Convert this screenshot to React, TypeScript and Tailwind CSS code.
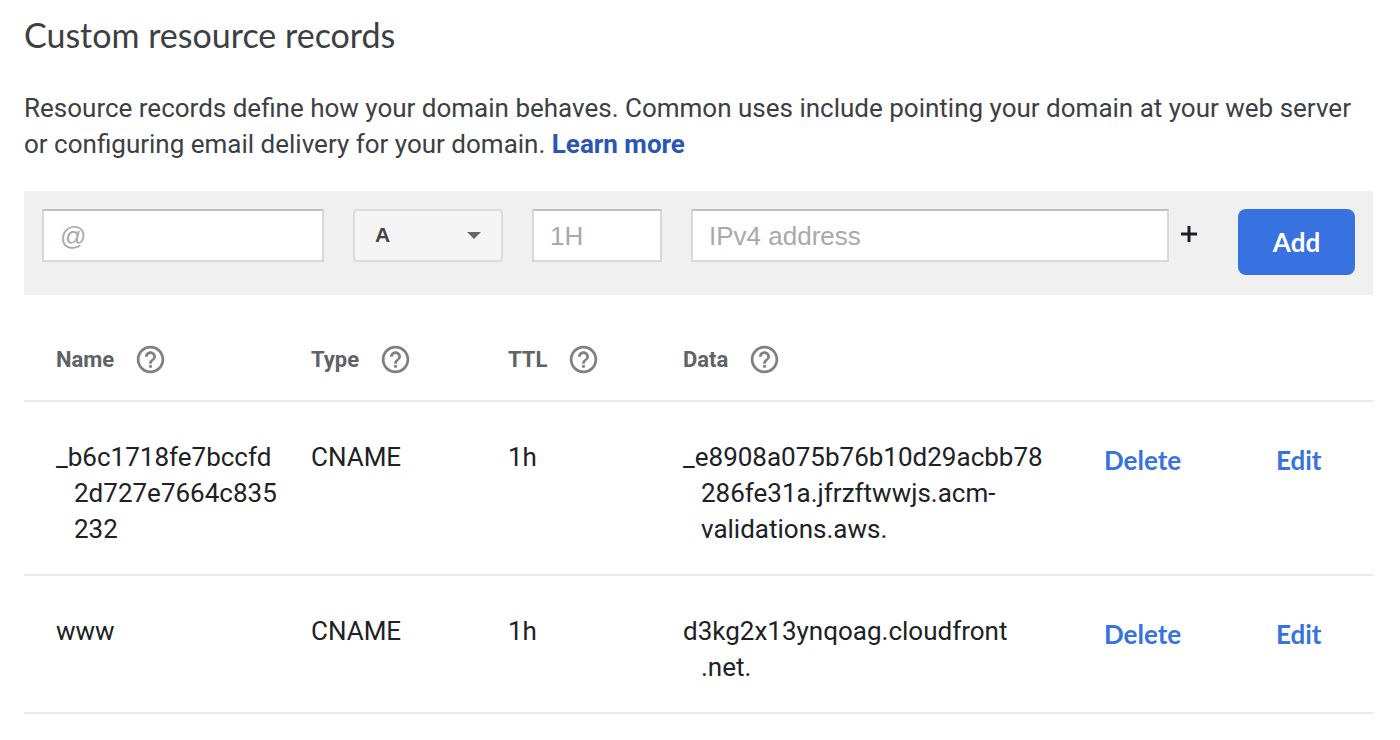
import { Fragment, type ReactNode } from "react";

type DnsRecord = {
  name: string[];
  type: string;
  ttl: string;
  data: string[];
};

const records: DnsRecord[] = [
  {
    name: ["_b6c1718fe7bccfd", "2d727e7664c835", "232"],
    type: "CNAME",
    ttl: "1h",
    data: ["_e8908a075b76b10d29acbb78", "286fe31a.jfrzftwwjs.acm-", "validations.aws."],
  },
  {
    name: ["www"],
    type: "CNAME",
    ttl: "1h",
    data: ["d3kg2x13ynqoag.cloudfront", ".net."],
  },
];

const fieldClass =
  "h-[53px] min-w-0 border-2 border-[#d9d9d9] border-t-[#c0c0c0] bg-white px-4 pt-0.5 font-['Liberation_Sans',sans-serif] text-[26px] text-[#333] outline-none placeholder:text-[#a9a9a9]";

const linkButtonClass = "cursor-pointer font-['Lato',sans-serif] text-[26px] leading-9 font-bold text-[#3871e0]";

function HelpIcon() {
  return (
    <svg viewBox="0 0 24 24" className="size-[33px]" fill="#808080" aria-hidden="true">
      <path d="M11 18h2v-2h-2v2zm1-16C6.48 2 2 6.48 2 12s4.48 10 10 10 10-4.48 10-10S17.52 2 12 2zm0 18c-4.41 0-8-3.59-8-8s3.59-8 8-8 8 3.59 8 8-3.59 8-8 8zm0-14c-2.21 0-4 1.79-4 4h2c0-1.1.9-2 2-2s2 .9 2 2c0 2-3 1.75-3 5h2c0-2.25 3-2.5 3-5 0-2.21-1.79-4-4-4z" />
    </svg>
  );
}

function HeaderCell({ label, first = false }: { label: string; first?: boolean }) {
  return (
    <th scope="col" className={first ? "p-0 pl-8" : "p-0"}>
      <div className="flex items-center gap-5 pt-12 pb-6 text-[22px] leading-8 font-bold text-[#5f6368]">
        {label}
        <button type="button" aria-label={`About ${label}`} className="cursor-pointer">
          <HelpIcon />
        </button>
      </div>
    </th>
  );
}

function Breakable({ parts }: { parts: string[] }) {
  return (
    <div className="pl-[18px] -indent-[18px]">
      {parts.map((part, i) => (
        <Fragment key={part}>
          {i > 0 && <wbr />}
          {part}
        </Fragment>
      ))}
    </div>
  );
}

function Cell({ children, className = "" }: { children: ReactNode; className?: string }) {
  return <td className={`pt-[37px] pb-[27px] align-top ${className}`}>{children}</td>;
}

export default function App() {
  return (
    <main className="min-h-screen bg-white pt-3 pr-[27px] pb-6 pl-6 font-['Roboto',sans-serif] text-[#202124]">
      <h1 className="font-['Lato',sans-serif] text-[34px] leading-[46px] text-[#3c4043]">Custom resource records</h1>
      <p className="-mr-2 mt-8 text-[26px] leading-9 text-[#3c4043]">
        Resource records define how your domain behaves. Common uses include pointing your domain at your web server or
        configuring email delivery for your domain.{" "}
        <a href="#learn-more" className="inline-block font-bold text-[#2a56b8]">
          Learn more
        </a>
      </p>

      <form
        className="mt-[29px] flex items-start bg-[#f0f0f0] px-[18px] pt-[18px] pb-5"
        onSubmit={(event) => event.preventDefault()}
      >
        <input aria-label="Name" placeholder="@" className={`${fieldClass} w-[282px]`} />
        <div className="relative ml-[29px] w-[150px]">
          <select
            aria-label="Type"
            className="h-[53px] w-full appearance-none rounded-[4px] border-2 border-[#dcdcdc] bg-[#f5f5f5] px-5 pb-0.5 font-['Liberation_Sans',sans-serif] text-[21px] font-bold text-[#444]"
          >
            <option>A</option>
            <option>AAAA</option>
            <option>CNAME</option>
            <option>MX</option>
            <option>TXT</option>
          </select>
          <svg
            viewBox="0 0 14 7"
            className="pointer-events-none absolute top-[23px] right-[22px] h-[7px] w-[14px]"
            fill="#666"
            aria-hidden="true"
          >
            <path d="M0 0h14L7 7z" />
          </svg>
        </div>
        <input aria-label="TTL" placeholder="1H" className={`${fieldClass} ml-[29px] w-[130px]`} />
        <input aria-label="Data" placeholder="IPv4 address" className={`${fieldClass} ml-[29px] flex-1`} />
        <button type="button" aria-label="Add another value" className="ml-3 flex h-[50px] cursor-pointer items-center">
          <svg viewBox="0 0 16 16" className="size-4" stroke="#202124" strokeWidth="3" aria-hidden="true">
            <path d="M8 0v16M0 8h16" />
          </svg>
        </button>
        <button
          type="submit"
          className="ml-[41px] h-[66px] w-[117px] cursor-pointer rounded-lg bg-[#3871e0] font-['Lato',sans-serif] text-[26px] font-bold text-white"
        >
          Add
        </button>
      </form>

      <table className="w-full table-fixed text-left text-[26px] leading-9">
        <colgroup>
          <col className="w-[287px]" />
          <col className="w-[197px]" />
          <col className="w-[175px]" />
          <col />
          <col className="w-[172px]" />
          <col className="w-[97px]" />
        </colgroup>
        <thead>
          <tr className="border-b-2 border-[#e8eaed]">
            <HeaderCell label="Name" first />
            <HeaderCell label="Type" />
            <HeaderCell label="TTL" />
            <HeaderCell label="Data" />
            <td />
            <td />
          </tr>
        </thead>
        <tbody>
          {records.map((record) => (
            <tr key={record.name[0]} className="border-b-2 border-[#e8eaed]">
              <Cell className="pr-4 pl-8">
                <Breakable parts={record.name} />
              </Cell>
              <Cell>{record.type}</Cell>
              <Cell>{record.ttl}</Cell>
              <Cell className="pr-[52px]">
                <Breakable parts={record.data} />
              </Cell>
              <td className="pt-10 align-top">
                <button type="button" className={linkButtonClass}>
                  Delete
                </button>
              </td>
              <td className="pt-10 align-top">
                <button type="button" className={linkButtonClass}>
                  Edit
                </button>
              </td>
            </tr>
          ))}
        </tbody>
      </table>
    </main>
  );
}
